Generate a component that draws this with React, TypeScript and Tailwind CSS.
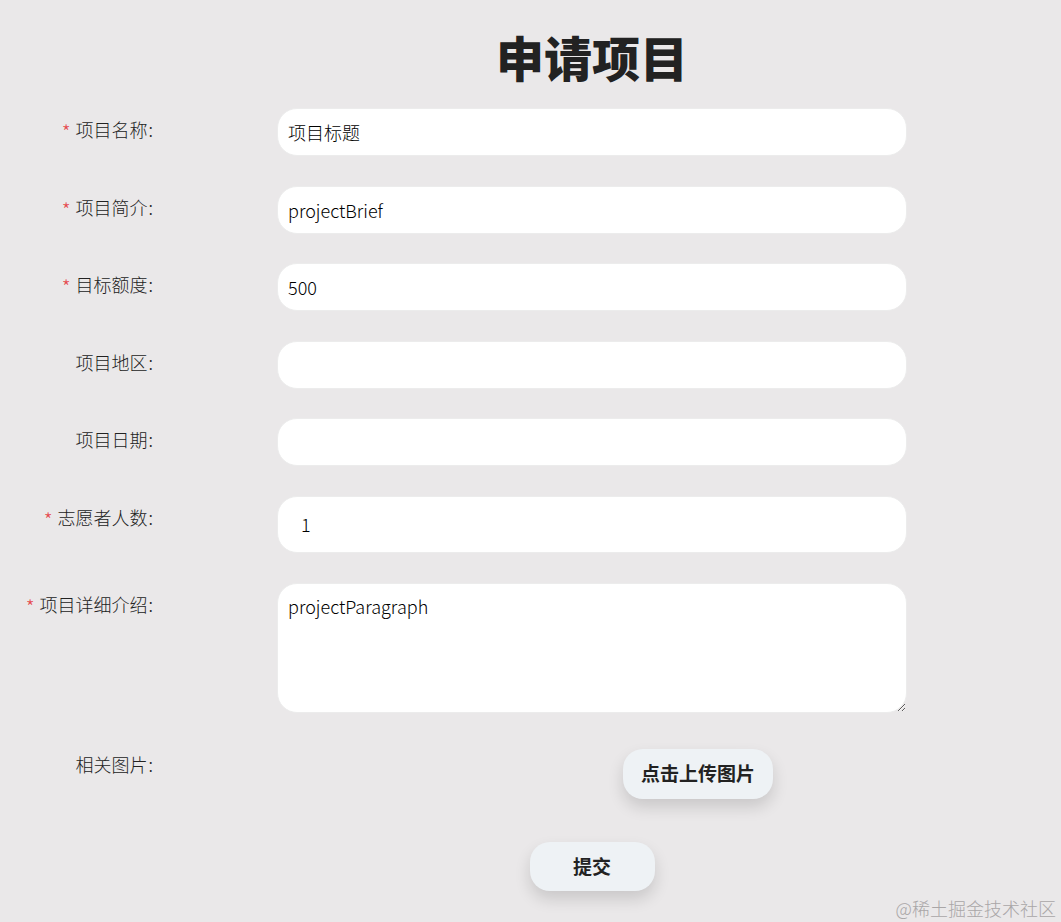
import React from "react";

const font = { fontFamily: '"Noto Sans CJK SC", "Noto Sans", sans-serif' };

function Label({ text, required, className = "" }: { text: string; required?: boolean; className?: string }) {
  return (
    <div className={`w-[153px] shrink-0 text-right text-[18px] leading-[27px] font-light text-[#222] ${className}`}>
      {required && (
        <span className="relative top-[3px] text-[#e5484d] text-[20px] leading-[0] mr-[5px]">*</span>
      )}
      {text}
      <span className="ml-[1px]">:</span>
    </div>
  );
}

function InputRow({
  label,
  value,
  required,
  h = "h-[48px]",
  pad = "pl-[10px]",
}: {
  label: string;
  value: string;
  required?: boolean;
  h?: string;
  pad?: string;
}) {
  return (
    <div className="flex items-start">
      <Label text={label} required={required} className="pt-[8px]" />
      <input
        readOnly
        value={value}
        className={`ml-[124px] w-[630px] ${h} ${pad} rounded-[20px] bg-white border border-[#ececec] text-[18px] font-light text-black outline-none`}
      />
    </div>
  );
}

export default function App() {
  return (
    <div className="relative min-h-[922px] w-full bg-[#eae8e9] overflow-hidden" style={font}>
      <div className="flex flex-col">
        <div className="ml-[277px] w-[630px] pt-[31px] text-center">
          <h1 className="text-[48px] leading-[50px] font-black text-[#222]">申请项目</h1>
        </div>
        <div className="mt-[27px] flex flex-col gap-y-[29.5px]">
          <InputRow label="项目名称" value="项目标题" required />
          <InputRow label="项目简介" value="projectBrief" required />
          <InputRow label="目标额度" value="500" required />
          <InputRow label="项目地区" value="" />
          <InputRow label="项目日期" value="" />
          <InputRow label="志愿者人数" value="1" required h="h-[57px]" pad="pl-[23px]" />
        </div>
        <div className="mt-[30px] flex items-start">
          <Label text="项目详细介绍" required className="pt-[8px]" />
          <textarea
            readOnly
            value="projectParagraph"
            className="ml-[124px] w-[630px] h-[130px] pl-[10px] pt-[9px] rounded-[20px] bg-white border border-[#ececec] text-[18px] leading-[27px] font-light text-black outline-none"
          />
        </div>
        <div className="mt-[31px] flex items-start">
          <Label text="相关图片" className="pt-[7px]" />
          <div className="ml-[124px] w-[630px] pt-[5px]">
            <button className="ml-[346px] w-[150px] h-[50px] rounded-[20px] bg-[#eef2f5] text-[19px] font-bold text-[#222] shadow-[0_8px_16px_rgba(0,0,0,0.14)]">
              点击上传图片
            </button>
          </div>
        </div>
        <div className="ml-[277px] w-[630px] mt-[43px] flex justify-center">
          <button className="w-[125px] h-[49px] rounded-[20px] bg-[#eef2f5] text-[19px] font-bold text-[#222] shadow-[0_8px_16px_rgba(0,0,0,0.14)]">
            提交
          </button>
        </div>
      </div>
      <div className="absolute right-[5px] bottom-[2px] text-[18px] leading-[24px] font-light text-[#a9a6a7]">
        @稀土掘金技术社区
      </div>
    </div>
  );
}
